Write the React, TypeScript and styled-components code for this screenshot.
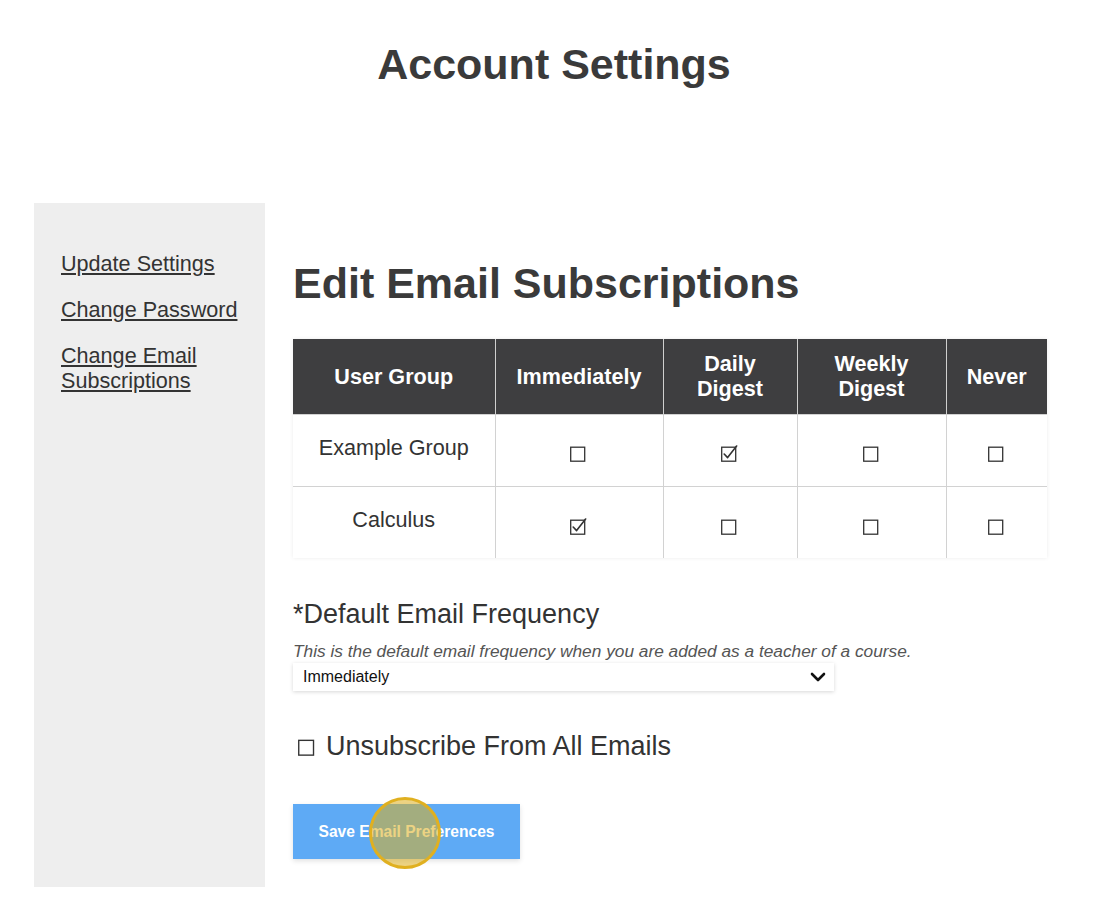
import styled, { createGlobalStyle } from "styled-components";

const GlobalStyle = createGlobalStyle`
  body {
    margin: 0;
    background: #ffffff;
    color: #333333;
    font-family: "Liberation Sans", Arial, sans-serif;
  }
`;

const Page = styled.div`
  width: 1120px;
  padding-bottom: 28px;
`;

const PageTitle = styled.h1`
  margin: 40px 0 0;
  padding-right: 12px;
  font-size: 43px;
  line-height: 49px;
  font-weight: 700;
  text-align: center;
  color: #3a3a3a;
`;

const Layout = styled.div`
  display: flex;
  align-items: stretch;
  margin: 114px 0 0 34px;
`;

const Sidebar = styled.nav`
  display: flex;
  flex-direction: column;
  gap: 21px;
  width: 231px;
  box-sizing: border-box;
  padding: 48px 27px 0;
  background: #eeeeee;
`;

const SideLink = styled.a`
  font-size: 21.6px;
  line-height: 25px;
  color: #333333;
  text-decoration: underline;
  text-underline-offset: 2px;
  cursor: pointer;
`;

const Main = styled.main`
  display: flex;
  flex-direction: column;
  width: 754px;
  padding: 56px 0 28px 28px;
`;

const SectionTitle = styled.h2`
  margin: 0;
  font-size: 43px;
  line-height: 49px;
  font-weight: 700;
  color: #3a3a3a;
`;

const Table = styled.table`
  margin-top: 31px;
  width: 754px;
  border-collapse: collapse;
  table-layout: fixed;
  box-shadow: 0 0 4px rgba(0, 0, 0, 0.08);
`;

const HeadCell = styled.th<{ $w: number }>`
  width: ${(p) => p.$w}px;
  height: 75px;
  padding: 0 8px;
  box-sizing: border-box;
  background: #3e3e40;
  color: #ffffff;
  font-size: 21.6px;
  line-height: 25px;
  font-weight: 700;
  text-align: center;
  border-left: 1px solid #cfcfcf;
  &:first-child {
    border-left: none;
  }
`;

const Cell = styled.td`
  height: 72px;
  box-sizing: border-box;
  padding: 0;
  text-align: center;
  font-size: 21.6px;
  line-height: 25px;
  color: #333333;
  border-left: 1px solid #d2d2d2;
  border-top: 1px solid #d2d2d2;
  &:first-child {
    border-left: none;
    padding-bottom: 5px;
  }
`;

const BoxWrap = styled.span`
  display: inline-flex;
  vertical-align: middle;
  padding-top: 4px;
`;

const FieldLabel = styled.div`
  margin-top: 41px;
  font-size: 27px;
  line-height: 31px;
  color: #333333;
`;

const HelpText = styled.div`
  margin-top: 11px;
  font-size: 17.3px;
  line-height: 20px;
  font-style: italic;
  color: #555555;
`;

const SelectBox = styled.div`
  display: flex;
  align-items: center;
  justify-content: space-between;
  margin-top: 2px;
  width: 541px;
  height: 28px;
  box-sizing: border-box;
  padding: 0 8px 0 10px;
  background: #ffffff;
  box-shadow: 0 1px 4px rgba(0, 0, 0, 0.16);
  font-size: 16px;
  color: #111111;
`;

const UnsubRow = styled.label`
  display: flex;
  align-items: center;
  gap: 9px;
  margin-top: 40px;
  padding-left: 5px;
  font-size: 27px;
  line-height: 31px;
  color: #333333;
`;

const ButtonWrap = styled.div`
  position: relative;
  align-self: flex-start;
  margin-top: 42px;
`;

const SaveButton = styled.button`
  display: block;
  width: 227px;
  height: 55px;
  border: none;
  background: #5eaaf5;
  color: #ffffff;
  font-family: "Liberation Sans", Arial, sans-serif;
  font-size: 15.6px;
  font-weight: 700;
  box-shadow: 0 2px 5px rgba(0, 0, 0, 0.12);
  cursor: pointer;
`;

const ClickMarker = styled.span`
  position: absolute;
  left: 76px;
  top: -7px;
  width: 66px;
  height: 66px;
  border: 3px solid #e0b020;
  border-radius: 50%;
  background: rgba(220, 175, 30, 0.55);
  pointer-events: none;
`;

const Checkbox = ({ checked, size = 15 }: { checked?: boolean; size?: number }) => (
  <svg width={size + 3} height={size + 2} viewBox="0 0 18 17">
    <rect x="0.7" y="2.2" width="14" height="14" fill="#fff" stroke="#333" strokeWidth="1.3" />
    {checked && (
      <path
        d="M3.2 9 L6.6 12.6 L15.6 1"
        fill="none"
        stroke="#333"
        strokeWidth="1.6"
        strokeLinecap="round"
        strokeLinejoin="round"
      />
    )}
  </svg>
);

const columns: { label: string[]; w: number }[] = [
  { label: ["User Group"], w: 202 },
  { label: ["Immediately"], w: 168 },
  { label: ["Daily", "Digest"], w: 134 },
  { label: ["Weekly", "Digest"], w: 149 },
  { label: ["Never"], w: 101 },
];

const rows: { group: string; choice: number }[] = [
  { group: "Example Group", choice: 1 },
  { group: "Calculus", choice: 0 },
];

const App = () => {
  return (
    <Page>
      <GlobalStyle />
      <PageTitle>Account Settings</PageTitle>
      <Layout>
        <Sidebar>
          <SideLink>Update Settings</SideLink>
          <SideLink>Change Password</SideLink>
          <SideLink>Change Email Subscriptions</SideLink>
        </Sidebar>
        <Main>
          <SectionTitle>Edit Email Subscriptions</SectionTitle>
          <Table>
            <thead>
              <tr>
                {columns.map((c) => (
                  <HeadCell key={c.label.join(" ")} $w={c.w}>
                    {c.label.map((l, i) => (
                      <span key={l}>
                        {i > 0 && <br />}
                        {l}
                      </span>
                    ))}
                  </HeadCell>
                ))}
              </tr>
            </thead>
            <tbody>
              {rows.map((r) => (
                <tr key={r.group}>
                  <Cell>{r.group}</Cell>
                  {[0, 1, 2, 3].map((i) => (
                    <Cell key={i}>
                      <BoxWrap>
                        <Checkbox checked={r.choice === i} />
                      </BoxWrap>
                    </Cell>
                  ))}
                </tr>
              ))}
            </tbody>
          </Table>
          <FieldLabel>*Default Email Frequency</FieldLabel>
          <HelpText>
            This is the default email frequency when you are added as a teacher of a course.
          </HelpText>
          <SelectBox>
            <span>Immediately</span>
            <svg width="16" height="12" viewBox="0 0 16 12">
              <path
                d="M2 3 L8 9 L14 3"
                fill="none"
                stroke="#111"
                strokeWidth="2.6"
                strokeLinecap="round"
                strokeLinejoin="round"
              />
            </svg>
          </SelectBox>
          <UnsubRow>
            <Checkbox size={16} />
            Unsubscribe From All Emails
          </UnsubRow>
          <ButtonWrap>
            <SaveButton>Save Email Preferences</SaveButton>
            <ClickMarker />
          </ButtonWrap>
        </Main>
      </Layout>
    </Page>
  );
};

export default App;
